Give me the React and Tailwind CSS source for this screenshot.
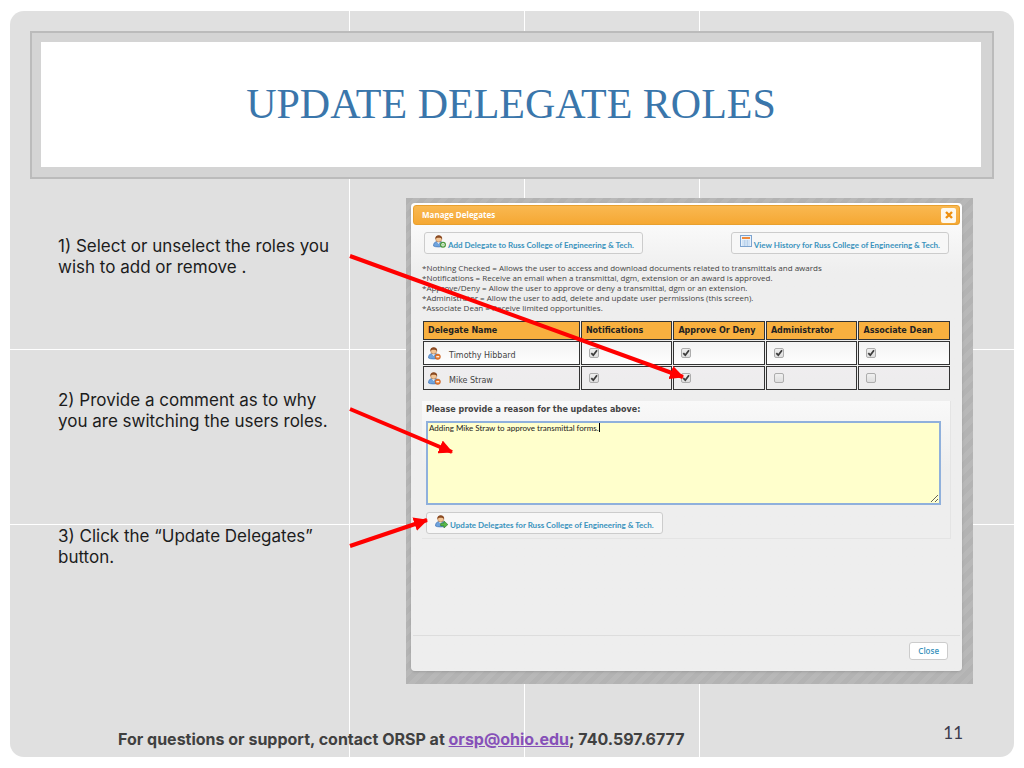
import { useState } from "react";

const steps = [
    { id: 1, text: "1) Select or unselect the roles you wish to add or remove .", gap: "mb-[112px]" },
    { id: 2, text: "2) Provide a comment as to why you are switching the users roles.", gap: "mb-[94px]" },
    { id: 3, text: "3) Click the “Update Delegates” button.", gap: "" },
];

const notes = [
    "*Nothing Checked = Allows the user to access and download documents related to transmittals and awards",
    "*Notifications = Receive an email when a transmittal, dgm, extension or an award is approved.",
    "*Approve/Deny = Allow the user to approve or deny a transmittal, dgm or an extension.",
    "*Administrator = Allow the user to add, delete and update user permissions (this screen).",
    "*Associate Dean = Receive limited opportunities.",
];

const roles = ["Notifications", "Approve Or Deny", "Administrator", "Associate Dean"];

const initialDelegates = [
    { name: "Timothy Hibbard", roles: [true, true, true, true] },
    { name: "Mike Straw", roles: [true, true, false, false] },
];

// User icon, the badge changes with the action
function UserIcon({ badge, className }) {
    return (
        <svg viewBox="0 0 16 16" className={className} aria-hidden="true">
            <path d="M.6 13.500c0-3.500 1.500-5.500 5.500-5.500h2c3.500 0 5 2 5 5.500-2 1.600-10.500 1.600-12.500 0z" fill="#6fa3dc" stroke="#3f73b5" strokeWidth="0.8" />
            <path d="M5 8.500l1.800 2.500L8.500 8.500z" fill="#fff" />
            <circle cx="7" cy="5" r="3.700" fill="#f3c595" stroke="#a8683a" strokeWidth="0.6" />
            <path d="M2.800 5.500C2.400 2 4.500.3 7 .3s4.800 1.700 4.300 5.200C10.300 3.800 8.800 3.500 7 3.500S3.800 4 2.800 5.500z" fill="#8a4a22" />
            {badge === "add" && (
                <g>
                    <circle cx="12.300" cy="12" r="2.900" fill="#fff" stroke="#4c9a3a" strokeWidth="1.600" />
                    <path d="M12.300 10.500v3M10.800 12h3" stroke="#8cc57c" strokeWidth="0.900" />
                </g>
            )}
            {badge === "remove" && (
                <g>
                    <circle cx="12" cy="12" r="3.300" fill="#e8792b" stroke="#c0561a" strokeWidth="0.7" />
                    <path d="M10.200 12h3.600" stroke="#fff" strokeWidth="1.500" />
                </g>
            )}
            {badge === "go" && (
                <path d="M7 10h4V7.300l4.800 4.500-4.800 4.200v-2.600H7z" fill="#58b848" stroke="#2f7a2a" strokeWidth="0.8" />
            )}
        </svg>
    );
}

function HistoryIcon() {
    return (
        <svg viewBox="0 0 12 12" className="size-3" aria-hidden="true">
            <rect x="0.500" y="0.500" width="11" height="11" fill="#eaf3fc" stroke="#7da3cf" />
            <rect x="2" y="2" width="8" height="2" fill="#ef8a3c" />
            <path d="M2 6h8M2 8h8M2 10h8M4.700 5v6M7.400 5v6" stroke="#a9c6e6" strokeWidth="0.700" />
        </svg>
    );
}

function ActionButton({ icon, children }) {
    return (
        <button
            type="button"
            className="flex h-[22px] items-center gap-[2px] rounded-[3px] border border-[#cccccc] bg-[#f7f7f7] px-2 font-[Lato,sans-serif] text-[8px] font-bold text-[#3a93bd] whitespace-nowrap"
        >
            <span className="pb-1">{icon}</span>
            <span className="pt-1">{children}</span>
        </button>
    );
}

function RoleCheckbox({ label, checked, onChange }) {
    return (
        <span className="relative block size-[10px]">
            <input
                type="checkbox"
                aria-label={label}
                checked={checked}
                onChange={onChange}
                className="peer block size-[10px] appearance-none rounded-[2px] border border-[#adadad] bg-linear-to-b from-[#f0f0f0] to-[#dedede]"
            />
            <svg viewBox="0 0 10 10" className="pointer-events-none absolute inset-0 hidden size-[10px] peer-checked:block">
                <path d="M2.300 5.200l2 2L8 2.300" fill="none" stroke="#3c3c3c" strokeWidth="1.800" />
            </svg>
        </span>
    );
}

function ManageDelegates() {
    const [delegates, setDelegates] = useState(initialDelegates);
    const [reason, setReason] = useState("Adding Mike Straw to approve transmittal forms.");

    const toggleRole = (row, col) => {
        setDelegates(
            delegates.map((d, i) =>
                i === row ? { ...d, roles: d.roles.map((r, j) => (j === col ? !r : r)) } : d
            )
        );
    };

    return (
        <div className="bg-[repeating-linear-gradient(135deg,#b3b3b3_0px,#b3b3b3_5px,#b8b8b8_5px,#b8b8b8_10px)] pt-[5px] pr-[11px] pb-[13px] pl-[5px]">
            <section className="rounded-[4px] bg-linear-to-b from-white to-[#eeeeee] to-15% p-[2px] font-['Open_Sans',sans-serif] shadow-sm">
                {/* Title bar */}
                <header className="flex h-5 items-center justify-between rounded-[3px] border border-[#e8a02f] bg-linear-to-b from-[#f9b850] to-[#f5a833] pr-[3px] pl-2">
                    <h2 className="text-[8px] font-bold text-white">Manage Delegates</h2>
                    <button type="button" aria-label="Close dialog" className="flex size-[15px] items-center justify-center rounded-[2px] bg-[#fdf8ee]">
                        <svg viewBox="0 0 8 8" className="size-2" aria-hidden="true">
                            <path d="M1 1l6 6M7 1L1 7" stroke="#ee8f0e" strokeWidth="2.400" />
                        </svg>
                    </button>
                </header>

                <div className="px-[9px] pt-[7px]">
                    <div className="flex justify-between pr-[2px] pl-[2px]">
                        <ActionButton icon={<UserIcon badge="add" className="size-[13px]" />}>
                            Add Delegate to Russ College of Engineering &amp; Tech.
                        </ActionButton>
                        <ActionButton icon={<HistoryIcon />}>
                            View History for Russ College of Engineering &amp; Tech.
                        </ActionButton>
                    </div>

                    <ul className="mt-[9px] text-[8px] leading-[10px] text-[#444444]">
                        {notes.map((note) => (
                            <li key={note}>{note}</li>
                        ))}
                    </ul>

                    {/* Delegates table */}
                    <table className="mt-[7px] w-full table-fixed border-separate border-spacing-px font-['DejaVu_Sans',sans-serif] text-[8px]">
                        <thead>
                            <tr className="h-[19px]">
                                <th className="w-[30%] border border-[#333333] bg-[#f8b03f] px-1 text-left text-[#222222]">Delegate Name</th>
                                {roles.map((role) => (
                                    <th key={role} className="border border-[#333333] bg-[#f8b03f] px-1 text-left whitespace-nowrap text-[#222222]">
                                        {role}
                                    </th>
                                ))}
                            </tr>
                        </thead>
                        <tbody>
                            {delegates.map((delegate, row) => (
                                <tr key={delegate.name} className="h-6 bg-linear-to-b from-[#f3f3f3] to-white even:from-[#efedef] even:to-[#ededed]">
                                    <td className="border border-[#333333] px-1">
                                        <span className="flex items-center gap-2 text-[#444444]">
                                            <UserIcon badge="remove" className="size-[13px]" />
                                            <span className="pt-[6px]">{delegate.name}</span>
                                        </span>
                                    </td>
                                    {delegate.roles.map((checked, col) => (
                                        <td key={roles[col]} className="border border-[#333333] px-[7px]">
                                            <RoleCheckbox
                                                label={`${delegate.name}: ${roles[col]}`}
                                                checked={checked}
                                                onChange={() => toggleRole(row, col)}
                                            />
                                        </td>
                                    ))}
                                </tr>
                            ))}
                        </tbody>
                    </table>

                    {/* Reason for the update */}
                    <form className="mt-[10px] border-r border-b border-[#e4e4e4] bg-linear-to-b from-[#f9f9f9] to-[#eeeeee] to-50% pt-[3px] pr-[9px] pb-1 pl-1">
                        <label htmlFor="reason" className="block font-['DejaVu_Sans',sans-serif] text-[8px] leading-3 font-bold text-[#444444]">
                            Please provide a reason for the updates above:
                        </label>
                        <div className="relative mt-[5px]">
                            <textarea
                                id="reason"
                                value={reason}
                                onChange={(e) => setReason(e.target.value)}
                                className="block h-[84px] w-full border-2 border-[#8fb0dc] bg-[#ffffcc] px-px font-[Lato,sans-serif] text-[8px] leading-[10px] text-[#222222] outline-none"
                            />
                            <span className="pointer-events-none absolute top-[2px] left-[173px] h-[9px] w-px bg-black" />
                        </div>
                        <div className="mt-[7px] flex">
                            <ActionButton icon={<UserIcon badge="go" className="size-[13px]" />}>
                                Update Delegates for Russ College of Engineering &amp; Tech.
                            </ActionButton>
                        </div>
                    </form>
                </div>

                <footer className="mt-24 flex justify-end border-t border-[#dddddd] px-3 pt-[6px] pb-[9px]">
                    <button type="button" className="h-[18px] rounded-[3px] border border-[#cccccc] bg-white px-2 text-[8px] font-semibold text-[#3a93bd]">
                        Close
                    </button>
                </footer>
            </section>
        </div>
    );
}

// Red arrows from each step to its place in the dialog
function Arrows() {
    return (
        <svg className="pointer-events-none absolute top-0 left-0 h-full w-full" aria-hidden="true">
            <defs>
                <marker id="head" viewBox="0 0 14 14" refX="13" refY="7" markerWidth="14" markerHeight="14" markerUnits="userSpaceOnUse" orient="auto">
                    <path d="M0 0L14 7L0 14z" fill="#ff0000" />
                </marker>
            </defs>
            <g stroke="#ff0000" strokeWidth="4">
                <path d="M340 77L673 198" markerEnd="url(#head)" />
                <path d="M340 230L442 273" markerEnd="url(#head)" />
                <path d="M340 367L417 341" markerEnd="url(#head)" />
            </g>
        </svg>
    );
}

export default function App() {
    return (
        <div className="bg-white px-[10px] py-[11px] font-[Inter,sans-serif]">
            <div className="overflow-hidden rounded-[14px] bg-[#e0e0e0] bg-[linear-gradient(#fff,#fff),linear-gradient(#fff,#fff),linear-gradient(#fff,#fff),linear-gradient(#fff,#fff),linear-gradient(#fff,#fff)] [background-size:1px_100%,1px_100%,1px_100%,100%_1px,100%_1px] [background-position:339px_0px,514px_0px,689px_0px,0px_338px,0px_513px] bg-no-repeat">
                <header className="mx-5 mt-5 border-2 border-[#bbbbbb] bg-[#d4d4d4] pt-[9px] pr-[11px] pb-[10px] pl-[9px]">
                    <h1 className="bg-white py-[38px] text-center font-['Liberation_Serif',serif] text-[42px] leading-[49px] text-[#3a76ab]">
                        UPDATE DELEGATE ROLES
                    </h1>
                </header>

                <main className="relative grid grid-cols-[348fr_567fr] pt-[19px] pr-[41px] pl-12">
                    <div className="pt-[38px] pr-[60px] text-[17px] leading-[21px] text-[#1c1c1c]">
                        {steps.map((step) => (
                            <p key={step.id} className={step.gap}>
                                {step.text}
                            </p>
                        ))}
                    </div>
                    <ManageDelegates />
                    <Arrows />
                </main>

                <footer className="flex items-start justify-between pt-[38px] pr-[51px] pb-[7px] pl-[108px]">
                    <p className="pt-[6px] text-[16px] leading-[22px] font-bold text-[#404040]">
                        For questions or support, contact ORSP at{" "}
                        <a href="mailto:orsp@ohio.edu" className="text-[#8650b8] underline">
                            orsp@ohio.edu
                        </a>
                        ; 740.597.6777
                    </p>
                    <span className="font-[Lato,sans-serif] text-[17px] leading-[22px] text-[#3b3b4d]">11</span>
                </footer>
            </div>
        </div>
    );
}
